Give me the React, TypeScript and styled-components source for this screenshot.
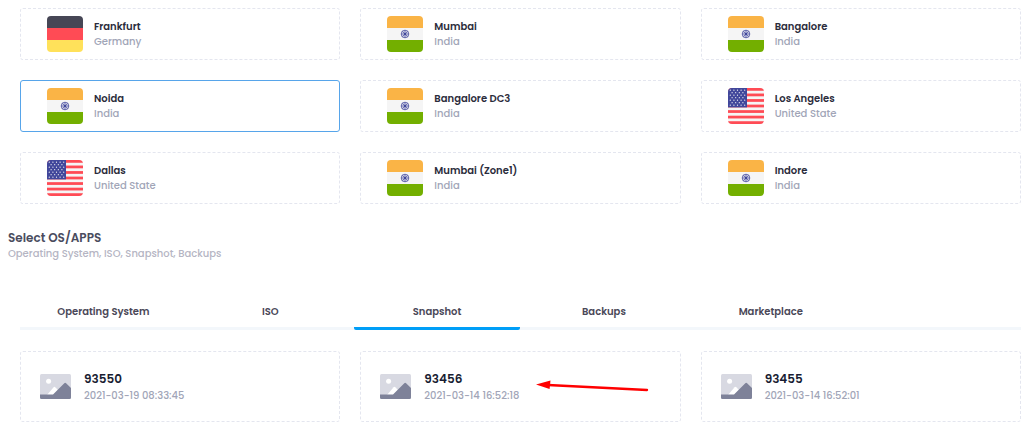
import React, { useState } from "react";
import styled, { createGlobalStyle } from "styled-components";

const GlobalStyle = createGlobalStyle`
  *, *::before, *::after { box-sizing: border-box; }
  body {
    margin: 0;
    background: #ffffff;
    font-family: Poppins, Inter, "Liberation Sans", sans-serif;
    font-size: 10px;
    line-height: 15px;
    font-weight: 500;
  }
  button { font: inherit; }
`;

const Page = styled.main`
  padding: 8px 3px 12px 8px;
`;

const CardGrid = styled.div`
  display: grid;
  grid-template-columns: repeat(3, 1fr);
  gap: 20px;
  padding-left: 12px;
`;

const Card = styled.label<{ $selected?: boolean; $size: "small" | "large" }>`
  position: relative;
  display: flex;
  align-items: center;
  gap: ${(p) => (p.$size === "small" ? 11 : 12)}px;
  height: ${(p) => (p.$size === "small" ? 52 : 71)}px;
  padding: 0 ${(p) => (p.$size === "small" ? 26 : 19)}px;
  border: 1px ${(p) => (p.$selected ? "solid #57a5ea" : "dashed #e4e6ef")};
  border-radius: 3px;
  cursor: pointer;
`;

const HiddenRadio = styled.input`
  position: absolute;
  inset: 0;
  width: 100%;
  height: 100%;
  margin: 0;
  opacity: 0;
  cursor: pointer;
`;

const CardText = styled.span`
  display: flex;
  flex-direction: column;
`;

const City = styled.span`
  color: #2b2c3b;
  font-weight: 600;
`;

const Detail = styled.span`
  color: #a1a5b7;
`;

const SnapshotId = styled.span`
  color: #181c32;
  font-size: 12px;
  line-height: 18px;
  font-weight: 600;
`;

const SectionHeader = styled.header`
  margin-top: 26px;
`;

const SectionTitle = styled.h2`
  margin: 0;
  color: #4a4c5e;
  font-size: 12px;
  line-height: 16px;
  font-weight: 600;
`;

const SectionHint = styled.p`
  margin: 0;
  color: #b5b5c3;
`;

const TabList = styled.div`
  display: grid;
  grid-template-columns: repeat(6, 1fr);
  margin: 31px 0 21px 12px;
  border-bottom: 3px solid #f3f7fb;
`;

const Tab = styled.button<{ $active: boolean }>`
  height: 38px;
  margin-bottom: -3px;
  padding: 3px 0 0;
  border: 0;
  border-bottom: 3px solid ${(p) => (p.$active ? "#009ef7" : "transparent")};
  border-radius: 2px;
  background: none;
  color: #4a4858;
  font-weight: 600;
  cursor: pointer;
`;

const FlagSvg = styled.svg`
  flex: none;
  width: 36px;
  height: 36px;
  border-radius: 4px;
`;

const PictureSvg = styled.svg`
  flex: none;
  width: 32px;
  height: 26px;
`;

const ArrowSvg = styled.svg`
  position: absolute;
  left: 175px;
  top: 25px;
  width: 114px;
  height: 16px;
  pointer-events: none;
`;

type Country = "Germany" | "India" | "United State";

function Flag({ country }: { country: Country }) {
  if (country === "Germany") {
    return (
      <FlagSvg viewBox="0 0 36 36" aria-hidden="true">
        <rect width="36" height="12" fill="#464655" />
        <rect y="12" width="36" height="12" fill="#ff4b55" />
        <rect y="24" width="36" height="12" fill="#ffe15a" />
      </FlagSvg>
    );
  }
  if (country === "India") {
    return (
      <FlagSvg viewBox="0 0 36 36" aria-hidden="true">
        <rect width="36" height="12" fill="#fab446" />
        <rect y="12" width="36" height="12" fill="#f5f5f5" />
        <rect y="24" width="36" height="12" fill="#73af00" />
        <circle cx="18" cy="18" r="3.8" fill="#dcdcec" />
        <g fill="none" stroke="#41479b">
          <circle cx="18" cy="18" r="3.8" strokeWidth="0.8" />
          <path
            d="M18 14.5v7M14.5 18h7M15.5 15.5l5 5M20.5 15.5l-5 5"
            strokeWidth="0.7"
          />
        </g>
        <circle cx="18" cy="18" r="1.2" fill="#41479b" />
      </FlagSvg>
    );
  }
  const stripe = 36 / 13;
  return (
    <FlagSvg viewBox="0 0 36 36" aria-hidden="true">
      <rect width="36" height="36" fill="#f5f5f5" />
      {[0, 2, 4, 6, 8, 10, 12].map((n) => (
        <rect key={n} y={n * stripe} width="36" height={stripe} fill="#ff4b55" />
      ))}
      <rect width="19" height={stripe * 7} fill="#41479b" />
      {[0, 1, 2, 3, 4, 5, 6].map((row) =>
        (row % 2 ? [1, 2, 3, 4] : [0, 1, 2, 3, 4]).map((col) => (
          <circle
            key={`${row}-${col}`}
            cx={2.3 + col * 3.6 - (row % 2 ? 1.8 : 0)}
            cy={2.2 + row * 2.5}
            r="0.6"
            fill="#f5f5f5"
          />
        ))
      )}
    </FlagSvg>
  );
}

function PictureIcon() {
  return (
    <PictureSvg viewBox="0 0 32 26" aria-hidden="true">
      <rect width="31" height="25" rx="1.5" fill="#d8d9e2" />
      <circle cx="8.6" cy="7.2" r="2.5" fill="#ffffff" />
      <path d="M7 21L13.600 13.200q.8-.8 1.600 0L18 16l-4 5z" fill="#ffffff" />
      <path
        d="M0 20.500H13L24.300 9.200q.9-.7 1.800 0L31 14V23.500q0 1.500-1.500 1.500h-28Q0 25 0 23.500z"
        fill="#7e8299"
      />
    </PictureSvg>
  );
}

function Arrow() {
  return (
    <ArrowSvg viewBox="0 0 114 16" aria-hidden="true">
      <path d="M12 8L111 13" stroke="#ff0000" strokeWidth="2.4" strokeLinecap="round" />
      <path d="M0 7.500L14.500 3.500L13.600 12z" fill="#ff0000" />
    </ArrowSvg>
  );
}

const locations: { city: string; country: Country }[] = [
  { city: "Frankfurt", country: "Germany" },
  { city: "Mumbai", country: "India" },
  { city: "Bangalore", country: "India" },
  { city: "Noida", country: "India" },
  { city: "Bangalore DC3", country: "India" },
  { city: "Los Angeles", country: "United State" },
  { city: "Dallas", country: "United State" },
  { city: "Mumbai (Zone1)", country: "India" },
  { city: "Indore", country: "India" },
];

const tabs = ["Operating System", "ISO", "Snapshot", "Backups", "Marketplace"];

const snapshots = [
  { id: "93550", date: "2021-03-19 08:33:45" },
  { id: "93456", date: "2021-03-14 16:52:18", marked: true },
  { id: "93455", date: "2021-03-14 16:52:01" },
];

export default function App() {
  const [city, setCity] = useState("Noida");
  const [tab, setTab] = useState("Snapshot");
  const [snapshot, setSnapshot] = useState("");

  return (
    <>
      <GlobalStyle />
      <Page>
        <CardGrid role="radiogroup" aria-label="Location">
          {locations.map((l) => (
            <Card key={l.city} $size="small" $selected={l.city === city}>
              <HiddenRadio
                type="radio"
                name="location"
                checked={l.city === city}
                onChange={() => setCity(l.city)}
              />
              <Flag country={l.country} />
              <CardText>
                <City>{l.city}</City>
                <Detail>{l.country}</Detail>
              </CardText>
            </Card>
          ))}
        </CardGrid>

        <SectionHeader>
          <SectionTitle>Select OS/APPS</SectionTitle>
          <SectionHint>Operating System, ISO, Snapshot, Backups</SectionHint>
        </SectionHeader>

        <TabList role="tablist">
          {tabs.map((t) => (
            <Tab
              key={t}
              type="button"
              role="tab"
              aria-selected={t === tab}
              $active={t === tab}
              onClick={() => setTab(t)}
            >
              {t}
            </Tab>
          ))}
        </TabList>

        <CardGrid role="radiogroup" aria-label="Snapshot">
          {snapshots.map((s) => (
            <Card key={s.id} $size="large" $selected={s.id === snapshot}>
              <HiddenRadio
                type="radio"
                name="snapshot"
                checked={s.id === snapshot}
                onChange={() => setSnapshot(s.id)}
              />
              <PictureIcon />
              <CardText>
                <SnapshotId>{s.id}</SnapshotId>
                <Detail>{s.date}</Detail>
              </CardText>
              {s.marked && <Arrow />}
            </Card>
          ))}
        </CardGrid>
      </Page>
    </>
  );
}
